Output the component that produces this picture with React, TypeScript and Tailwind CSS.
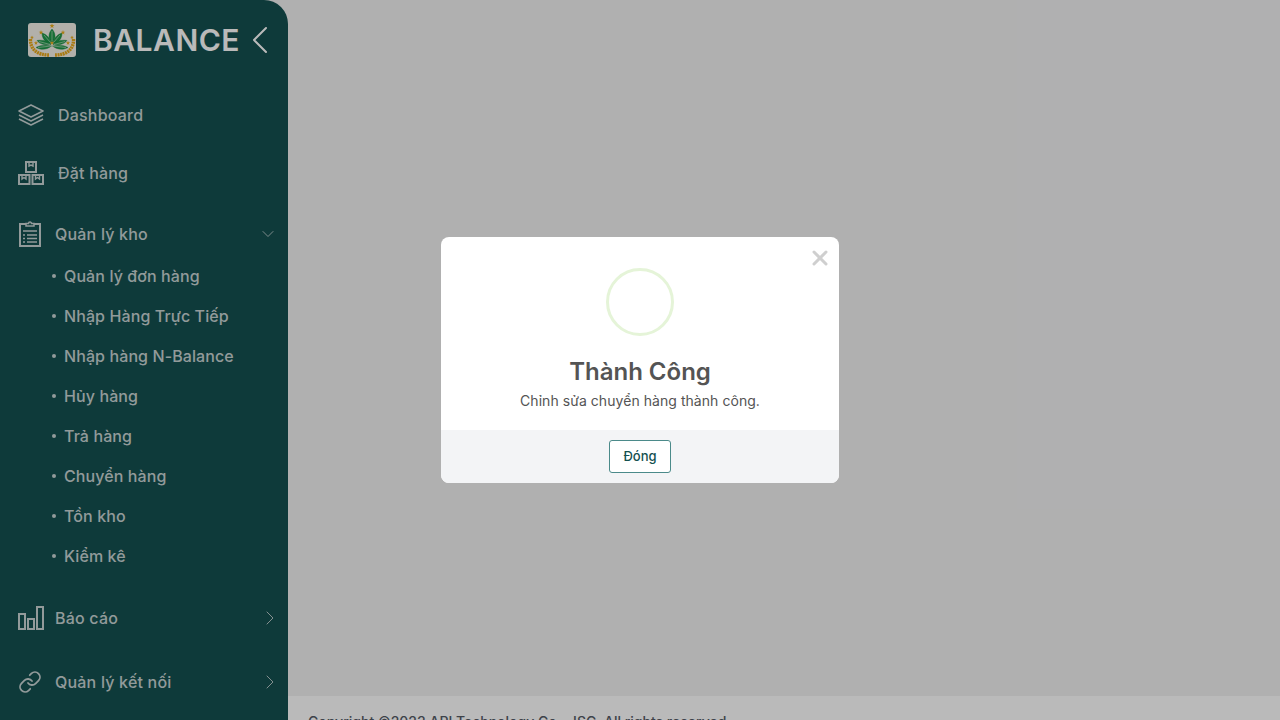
import { ChevronDown, ChevronLeft, ChevronRight, Link, X } from "lucide-react";
import { ReactNode } from "react";

const subItems = [
  "Quản lý đơn hàng",
  "Nhập Hàng Trực Tiếp",
  "Nhập hàng N-Balance",
  "Hủy hàng",
  "Trả hàng",
  "Chuyển hàng",
  "Tồn kho",
  "Kiểm kê",
];

const stars = [
  [24, 3, 2.6],
  [13, 9.5, 2.4],
  [35, 9.5, 2.4],
  [4, 14.5, 2],
  [44, 14.5, 2],
  [8, 20, 2.2],
  [40, 20, 2.2],
  [24, 20, 2.2],
];

const Star = ({ x, y, r }: { x: number; y: number; r: number }) => {
  const points = Array.from({ length: 10 }, (_, i) => {
    const a = (Math.PI / 5) * i - Math.PI / 2;
    const d = i % 2 === 0 ? r : r * 0.42;
    return `${x + d * Math.cos(a)},${y + d * Math.sin(a)}`;
  }).join(" ");
  return <polygon points={points} fill="#e8ad1c" />;
};

const Logo = () => (
  <svg viewBox="0 0 48 34" className="h-[34px] w-[48px] shrink-0">
    <rect width="48" height="34" rx="3" fill="#f4f2ea" />
    <g fill="none" stroke="#e8a91c" strokeWidth="3.400" strokeDasharray="2 0.600">
      <path d="M2.500 16C2 26 9 32 21 32" />
      <path d="M45.500 16C46 26 39 32 27 32" />
    </g>
    <g fill="#1f9a4a" stroke="#0f7a38" strokeWidth="0.400">
      <path d="M24 6c-4 4.500-4 10 0 13.500 4-3.500 4-9 0-13.500z" />
      <path d="M14 10c0 5.500 3 9.500 9 10.500-.5-5-4-9-9-10.500z" />
      <path d="M34 10c0 5.500-3 9.500-9 10.500.5-5 4-9 9-10.500z" />
      <path d="M9 17.500c3 4 8.500 5 14 4-3-3.500-8.500-5-14-4z" />
      <path d="M39 17.500c-3 4-8.500 5-14 4 3-3.500 8.500-5 14-4z" />
      <path d="M8 24.500c5.500 3 11 2 15.500-1.500-5.500-1.500-11-1-15.500 1.500z" />
      <path d="M40 24.500c-5.500 3-11 2-15.500-1.500 5.500-1.500 11-1 15.500 1.500z" />
    </g>
    <g fill="none" stroke="#f4f2ea" strokeWidth="0.500">
      <path d="M24 8v10M16 12l6.500 7.500M32 12l-6.500 7.500M11 18.500l11 3M37 18.500l-11 3M10 24.500l13-1.500M38 24.500l-13-1.500" />
    </g>
    {stars.map(([x, y, r]) => (
      <Star key={`${x}-${y}`} x={x} y={y} r={r} />
    ))}
  </svg>
);

const LayersIcon = () => (
  <svg viewBox="0 0 26 22" className="h-[22px] w-[26px]" fill="none" stroke="currentColor" strokeWidth="1.600" strokeLinejoin="round">
    <path d="M13 1 25 7 13 13 1 7z" />
    <path d="M1 11l12 6 12-6" />
    <path d="M1 15l12 6 12-6" />
  </svg>
);

const BoxesIcon = () => (
  <svg viewBox="0 0 26 24" className="h-[24px] w-[26px]" fill="none" stroke="currentColor" strokeWidth="2">
    <rect x="8" y="1" width="10" height="10" />
    <rect x="1" y="14" width="10.500" height="9" />
    <rect x="14.500" y="14" width="10.500" height="9" />
    <path d="M11 1v4l2-1 2 1V1M4 14v4l2-1.500 2 1.500v-4M17.500 14v4l2-1.500 2 1.500v-4" strokeWidth="1.400" />
  </svg>
);

const ClipboardIcon = () => (
  <svg viewBox="0 0 22 26" className="h-[26px] w-[22px]" fill="none" stroke="currentColor" strokeWidth="2">
    <path d="M7 3H1v22h20V3h-6" />
    <path d="M7 5V2.500h2.500a1.500 1.500 0 0 1 3 0H15V5z" strokeWidth="1.500" />
    <path d="M4 10h14" strokeWidth="1.500" />
    <path d="M4 14h2M8 14h10M4 17.500h2M8 17.500h10M4 21h2M8 21h10" strokeWidth="1.500" />
  </svg>
);

const BarsIcon = () => (
  <svg viewBox="0 0 26 24" className="h-[24px] w-[26px]" fill="none" stroke="currentColor" strokeWidth="2">
    <rect x="1" y="8" width="6" height="15" />
    <rect x="10" y="13" width="6" height="10" />
    <rect x="19" y="1" width="6" height="22" />
  </svg>
);

const MenuRow = ({ icon, label, right, className }: { icon: ReactNode; label: string; right?: ReactNode; className: string }) => (
  <div className={"flex items-center pl-[18px] " + className}>
    {icon}
    <span className="text-[16px] font-medium tracking-[0.2px]">{label}</span>
    {right && <span className="ml-auto">{right}</span>}
  </div>
);

export default function App() {
  return (
    <div className="relative flex h-screen overflow-hidden bg-[#f1f1f2] font-['Inter',sans-serif]">
      <aside className="flex h-full w-[288px] shrink-0 flex-col overflow-hidden rounded-tr-[24px] bg-[#145050] text-[#c8d4d4]">
        <div className="flex h-[80px] shrink-0 items-center pl-[28px]">
          <Logo />
          <span className="ml-[17px] text-[30px] font-semibold tracking-[0.5px] text-white">BALANCE</span>
          <ChevronLeft className="ml-[-4px] h-[48px] w-[48px] shrink-0 text-white" strokeWidth={1} />
        </div>

        <div className="mt-[6px] flex h-[58px] items-center pl-[18px]">
          <LayersIcon />
          <span className="ml-[14px] text-[16px] font-medium tracking-[0.2px]">Dashboard</span>
        </div>
        <div className="flex h-[58px] items-center pl-[18px]">
          <BoxesIcon />
          <span className="ml-[14px] text-[16px] font-medium tracking-[0.2px]">Đặt hàng</span>
        </div>

        <MenuRow
          className="mt-[10px] h-[44px] pr-[10px]"
          icon={<span className="ml-px mr-[14px] flex"><ClipboardIcon /></span>}
          label="Quản lý kho"
          right={<ChevronDown className="h-[20px] w-[20px]" strokeWidth={1} />}
        />
        <ul className="flex flex-col">
          {subItems.map((item) => (
            <li key={item} className="flex h-[40px] items-center pl-[52px] text-[16px] font-medium tracking-[0.1px]">
              <span className="mr-[8px] h-[4px] w-[4px] rounded-full bg-current" />
              {item}
            </li>
          ))}
        </ul>
        <MenuRow
          className="mt-[10px] h-[64px] pr-[6px]"
          icon={<span className="mr-[11px] flex"><BarsIcon /></span>}
          label="Báo cáo"
          right={<ChevronRight className="h-[24px] w-[24px]" strokeWidth={0.900} />}
        />
        <MenuRow
          className="h-[64px] pr-[6px]"
          icon={<Link className="mr-[13px] h-[24px] w-[24px]" strokeWidth={1.800} />}
          label="Quản lý kết nối"
          right={<ChevronRight className="h-[24px] w-[24px]" strokeWidth={0.900} />}
        />
      </aside>

      <div className="flex min-w-0 flex-1 flex-col">
        <main className="flex-1" />
        <footer className="h-[24px] shrink-0 overflow-hidden bg-white pl-[20px] pt-[16px] text-[14px] font-medium leading-[20px] text-[#555b66]">
          Copyright ©2023 API Technology Co., JSC. All rights reserved.
        </footer>
      </div>

      <div className="absolute inset-0 flex items-center justify-center bg-black/[0.27]">
        <div className="w-[398px] overflow-hidden rounded-lg bg-white">
          <div className="relative flex h-[193px] flex-col items-center pt-[31px]">
            <X className="absolute right-[7px] top-[9px] h-[24px] w-[24px] text-[#cfcfcf]" strokeWidth={3} />
            <div className="h-[68px] w-[68px] rounded-full border-[3px] border-[#e5f4d8]" />
            <h2 className="mt-[20px] text-[24px] font-semibold leading-[32px] text-[#545454]">Thành Công</h2>
            <p className="mt-[1px] text-[14px] leading-[24px] tracking-[0.05px] text-[#545454]">Chỉnh sửa chuyển hàng thành công.</p>
          </div>
          <div className="flex h-[53px] items-start justify-center bg-[#f3f4f6] pt-[10px]">
            <button className="h-[33px] w-[62px] rounded-[3px] border border-[#4b8a8a] bg-white text-[13px] font-medium text-[#145050]">Đóng</button>
          </div>
        </div>
      </div>
    </div>
  );
}
